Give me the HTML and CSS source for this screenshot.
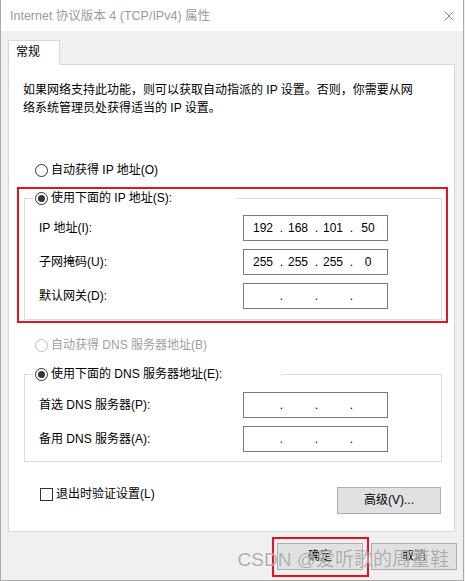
FILE: index.html
```html
<!DOCTYPE html>
<html lang="zh-CN">
<head>
<meta charset="utf-8">
<title>Internet 协议版本 4 (TCP/IPv4) 属性</title>
<link rel="stylesheet" href="styles.css">
</head>
<body>
<div class="window">
  <div class="titlebar">
    <span class="title">Internet 协议版本 4 (TCP/IPv4) 属性</span>
    <svg class="close" width="10" height="10" viewBox="0 0 10 10"><path d="M0.5 0.5L9.5 9.5M9.5 0.5L0.5 9.5" stroke="#8a8a8a" stroke-width="1" fill="none"/></svg>
  </div>
  <div class="client">
    <div class="tabs"><div class="tab">常规</div></div>
    <div class="panel">
      <p class="desc">如果网络支持此功能，则可以获取自动指派的 IP 设置。否则，你需要从网<br>络系统管理员处获得适当的 IP 设置。</p>
      <div class="radio-row first"><span class="radio"></span><span>自动获得 IP 地址(O)</span></div>
      <div class="highlight">
        <fieldset class="group">
          <legend class="legend legend-ip"><span class="radio checked"></span><span>使用下面的 IP 地址(S):</span></legend>
          <div class="field-row">
            <span class="label">IP 地址(I):</span>
            <div class="ipbox"><span class="oct">192</span><span class="dot">.</span><span class="oct">168</span><span class="dot">.</span><span class="oct">101</span><span class="dot">.</span><span class="oct">50</span></div>
          </div>
          <div class="field-row">
            <span class="label">子网掩码(U):</span>
            <div class="ipbox"><span class="oct">255</span><span class="dot">.</span><span class="oct">255</span><span class="dot">.</span><span class="oct">255</span><span class="dot">.</span><span class="oct">0</span></div>
          </div>
          <div class="field-row">
            <span class="label">默认网关(D):</span>
            <div class="ipbox"><span class="oct"></span><span class="dot">.</span><span class="oct"></span><span class="dot">.</span><span class="oct"></span><span class="dot">.</span><span class="oct"></span></div>
          </div>
        </fieldset>
      </div>
      <div class="radio-row dns-auto disabled"><span class="radio"></span><span>自动获得 DNS 服务器地址(B)</span></div>
      <fieldset class="group group-dns">
        <legend class="legend legend-dns"><span class="radio checked"></span><span>使用下面的 DNS 服务器地址(E):</span></legend>
        <div class="field-row">
          <span class="label">首选 DNS 服务器(P):</span>
          <div class="ipbox"><span class="oct"></span><span class="dot">.</span><span class="oct"></span><span class="dot">.</span><span class="oct"></span><span class="dot">.</span><span class="oct"></span></div>
        </div>
        <div class="field-row">
          <span class="label">备用 DNS 服务器(A):</span>
          <div class="ipbox"><span class="oct"></span><span class="dot">.</span><span class="oct"></span><span class="dot">.</span><span class="oct"></span><span class="dot">.</span><span class="oct"></span></div>
        </div>
      </fieldset>
      <div class="bottom-row">
        <label class="check-row"><span class="checkbox"></span><span>退出时验证设置(L)</span></label>
        <button class="btn btn-adv" type="button">高级(V)...</button>
      </div>
    </div>
    <div class="buttons">
      <div class="ok-mark"><button class="btn" type="button">确定</button></div>
      <button class="btn btn-cancel" type="button">取消</button>
    </div>
  </div>
  <div class="watermark">CSDN @爱听歌的周董鞋</div>
</div>
</body>
</html>
```
FILE: styles.css
```css
* { box-sizing: border-box; }
html, body { margin: 0; padding: 0; }
body {
  background: #f0f0f0;
  font-family: "Liberation Sans", "Noto Sans CJK SC", sans-serif;
  font-size: 12px;
  color: #000;
}
.window {
  width: 464px;
  height: 581px;
  border: 1px solid #a9a9a9;
  border-top: none;
  background: #f0f0f0;
  position: relative;
  display: flex;
  flex-direction: column;
}
.titlebar {
  height: 31px;
  flex: none;
  background: #fff;
  display: flex;
  align-items: center;
  justify-content: space-between;
  padding: 0 9px;
}
.title { color: #9b9b9b; line-height: 16px; font-size: 12.5px; }
.close { display: block; }
.client {
  flex: 1;
  padding: 9px 8px 0 7px;
  display: flex;
  flex-direction: column;
}
.tabs { display: flex; }
.tab {
  width: 52px;
  height: 25px;
  border: 1px solid #d9d9d9;
  border-bottom: none;
  background: #fff;
  padding: 0 0 2px 7px;
  line-height: 22px;
  margin-bottom: -1px;
  position: relative;
  z-index: 1;
}
.panel {
  height: 468px;
  background: #fff;
  border: 1px solid #d9d9d9;
  padding: 16px 12px 0 15px;
  display: flex;
  flex-direction: column;
}
.desc {
  margin: 0 0 0 -1px;
  line-height: 18px;
  white-space: nowrap;
}
.radio-row {
  display: flex;
  align-items: center;
  gap: 3px;
  height: 16px;
  line-height: 16px;
  margin-left: 11px;
}
.first { margin-top: 45px; }
.radio {
  width: 13px;
  height: 13px;
  flex: none;
  border: 1px solid #333;
  border-radius: 50%;
  background: #fff;
  display: inline-flex;
  align-items: center;
  justify-content: center;
}
.radio.checked::after {
  content: "";
  width: 7px;
  height: 7px;
  border-radius: 50%;
  background: #333;
}
.disabled { color: #a0a0a0; }
.disabled .radio { border-color: #bcbcbc; }
.highlight {
  margin: 9px -6px 0 -7px;
  border: 2px solid #e3141e;
  padding: 1px 4px 1px 5px;
}
.group {
  margin: 0;
  min-width: 0;
  border: 1px solid #dcdcdc;
  padding: 9px 0 10px 8px;
}
.legend {
  display: flex;
  align-items: center;
  gap: 3px;
  height: 16px;
  line-height: 16px;
  padding: 0 0 0 2px;
}
.legend-ip { width: 202px; }
.legend-dns { width: 249px; }
.group-dns {
  margin-top: 13px;
  padding-top: 10px;
  padding-bottom: 9px;
}
.dns-auto { margin-top: 14px; }
.field-row {
  display: flex;
  align-items: center;
  height: 26px;
  margin-left: 6px;
}
.field-row + .field-row { margin-top: 8px; }
.label { width: 204px; flex: none; line-height: 16px; }
.ipbox {
  width: 145px;
  height: 26px;
  border: 1px solid #7a7a7a;
  display: flex;
  align-items: center;
  padding: 0 0 1px 4px;
  line-height: 16px;
}
.oct { width: 30px; text-align: center; }
.dot { width: 5px; text-align: right; }
.bottom-row {
  display: flex;
  justify-content: space-between;
  align-items: flex-start;
  margin-top: 25px;
  margin-right: 1px;
}
.check-row {
  display: flex;
  align-items: center;
  gap: 3px;
  height: 14px;
  line-height: 14px;
  margin-left: 16px;
}
.checkbox {
  width: 13px;
  height: 13px;
  flex: none;
  border: 1px solid #333;
  background: #fff;
}
.btn {
  width: 86px;
  height: 27px;
  padding: 0;
  margin: 0;
  background: #e1e1e1;
  border: 1px solid #adadad;
  font-family: inherit;
  font-size: 12px;
  line-height: 25px;
  color: #000;
}
.btn-adv { width: 104px; }
.buttons {
  display: flex;
  justify-content: flex-end;
  align-items: flex-start;
  gap: 2px;
  margin: 5px -2px 0 0;
}
.ok-mark {
  border: 2px solid #e3141e;
  padding: 4px 4px 5px 3px;
}
.btn-cancel { margin-top: 6px; }
.watermark {
  position: absolute;
  right: 14px;
  bottom: 8px;
  font-size: 19px;
  line-height: 24px;
  color: rgba(120, 120, 120, 0.6);
  text-shadow: 0 0 1px rgba(255, 255, 255, 0.9);
  white-space: nowrap;
}
```
